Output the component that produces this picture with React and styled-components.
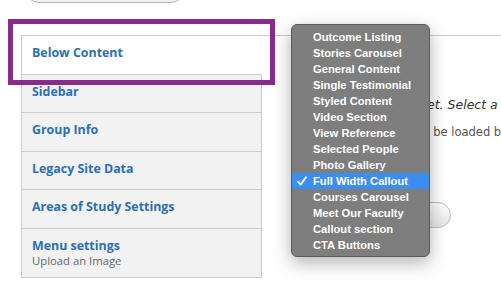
import React from 'react';
import styled, { createGlobalStyle } from 'styled-components';

const Global = createGlobalStyle`
  html, body { margin: 0; padding: 0; background: #fff; overflow: hidden; }
  body { width: 501px; height: 281px; }
`;

const Page = styled.div`
  position: relative;
  width: 501px;
  height: 281px;
  overflow: hidden;
  font-family: "Open Sans", sans-serif;
`;

const TopButton = styled.div`
  margin: -25px 0 0 25px;
  width: 160px;
  height: 28px;
  box-sizing: border-box;
  border: 1px solid #b4b4b4;
  border-radius: 14px;
  background: linear-gradient(#fdfdfd, #f0f0f0);
`;

const VerticalTabs = styled.div`
  display: flex;
  margin: 32px 0 0 21px;
  border-top: 1px solid #cccccc;
`;

const TabList = styled.ul`
  flex: none;
  width: 241px;
  margin: 0;
  padding: 0;
  list-style: none;
  box-sizing: border-box;
  border-left: 1px solid #cccccc;
`;

const TabItem = styled.li`
  padding: 9px 10px ${p => (p.$pb ? p.$pb : '12.5px')};
  background: ${p => (p.$selected ? '#ffffff' : '#f2f2f2')};
  border-bottom: 1px solid #cccccc;
  border-right: 1px solid ${p => (p.$selected ? 'transparent' : '#cccccc')};
`;

const TabTitle = styled.a`
  display: block;
  font: 700 12.4px/16px "Open Sans", sans-serif;
  color: #2b6fb4;
  text-decoration: none;
`;

const TabDesc = styled.span`
  display: block;
  font: 400 11.3px/14px "Open Sans", sans-serif;
  color: #666666;
`;

const Pane = styled.div`
  flex: 1;
  min-width: 0;
  display: flex;
  flex-direction: column;
  align-items: flex-start;
  padding: 60px 0 0 38px;
  background: #ffffff;
`;

const EmptyText = styled.p`
  margin: 0;
  white-space: nowrap;
  font: italic 400 12.5px/18px "DejaVu Sans", sans-serif;
  color: #333333;
`;

const Help = styled.p`
  margin: 11px 0 0 6px;
  white-space: nowrap;
  font: 400 11.5px/14px "DejaVu Sans", sans-serif;
  color: #555555;
`;

const AddButton = styled.button`
  margin: 63px 0 0 24px;
  height: 26px;
  padding: 0 20px;
  border: 1px solid #bdbdbd;
  border-radius: 13px;
  background: linear-gradient(#fefefe, #e6e6e6);
  font: 700 12.5px/24px "DejaVu Sans", sans-serif;
  color: #333333;
  white-space: nowrap;
`;

const Highlight = styled.div`
  position: absolute;
  left: 8px;
  top: 19px;
  width: 267px;
  height: 66px;
  box-sizing: border-box;
  border: 5px solid #8a2a8c;
  pointer-events: none;
`;

const Menu = styled.ul`
  position: absolute;
  left: 291px;
  top: 24px;
  width: 139px;
  height: 233px;
  box-sizing: border-box;
  margin: 0;
  padding: 4px 0;
  list-style: none;
  background: #7e7e7e;
  border: 1px solid #5a5a5a;
  border-radius: 6px;
  box-shadow: 0 6px 18px rgba(0, 0, 0, 0.3);
`;

const MenuItem = styled.li`
  display: flex;
  align-items: center;
  height: 16px;
  background: ${p => (p.$active ? '#3a8ef0' : 'transparent')};
  font: 700 11.2px/16px "Liberation Sans", Arial, sans-serif;
  color: #ffffff;
  white-space: nowrap;
`;

const CheckSlot = styled.span`
  flex: none;
  width: 21px;
  height: 16px;
  display: flex;
  align-items: center;
  padding-left: 5px;
  box-sizing: border-box;
`;

const Check = () => (
  <svg width="10" height="10" viewBox="0 0 10 10" aria-hidden="true">
    <path d="M1 5.6 L3.6 8.6 L9 1.2" fill="none" stroke="#fff" strokeWidth="1.8" strokeLinecap="round" strokeLinejoin="round" />
  </svg>
);

const tabs = [
  { title: 'Below Content', selected: true },
  { title: 'Sidebar' },
  { title: 'Group Info' },
  { title: 'Legacy Site Data' },
  { title: 'Areas of Study Settings' },
  { title: 'Menu settings', desc: 'Upload an Image' },
];

const options = [
  'Outcome Listing',
  'Stories Carousel',
  'General Content',
  'Single Testimonial',
  'Styled Content',
  'Video Section',
  'View Reference',
  'Selected People',
  'Photo Gallery',
  'Full Width Callout',
  'Courses Carousel',
  'Meet Our Faculty',
  'Callout section',
  'CTA Buttons',
];

export default function App() {
  return (
    <Page>
      <Global />
      <TopButton />
      <VerticalTabs>
        <TabList>
          {tabs.map(t => (
            <TabItem key={t.title} $selected={t.selected} $pb={t.desc ? '9.5px' : undefined}>
              <TabTitle href="#">{t.title}</TabTitle>
              {t.desc && <TabDesc>{t.desc}</TabDesc>}
            </TabItem>
          ))}
        </TabList>
        <Pane>
          <EmptyText>No sections added yet. Select a section type to add it.</EmptyText>
          <Help>Selected sections will be loaded by default.</Help>
          <AddButton type="button">Add Section</AddButton>
        </Pane>
      </VerticalTabs>
      <Highlight />
      <Menu>
        {options.map(o => (
          <MenuItem key={o} $active={o === 'Full Width Callout'}>
            <CheckSlot>{o === 'Full Width Callout' && <Check />}</CheckSlot>
            {o}
          </MenuItem>
        ))}
      </Menu>
    </Page>
  );
}
